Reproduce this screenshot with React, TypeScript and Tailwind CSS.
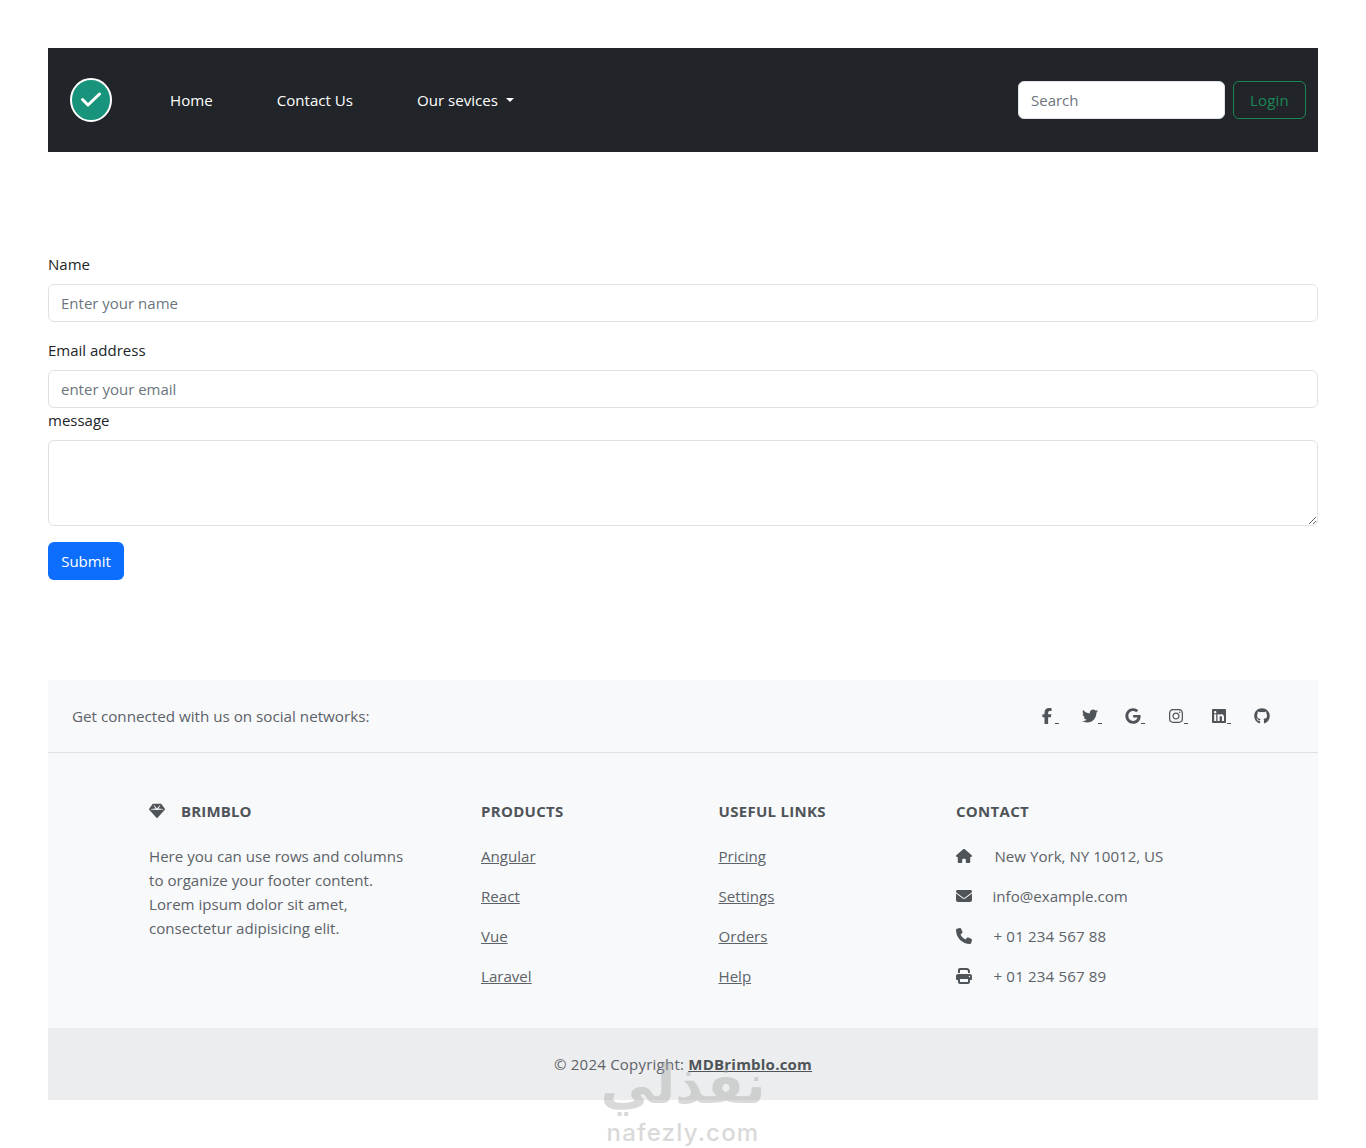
import { FaFacebookF, FaTwitter, FaGoogle, FaInstagram, FaLinkedin, FaGithub, FaGem, FaHouse, FaEnvelope, FaPhone, FaPrint } from "react-icons/fa6"

const socials = [FaFacebookF, FaTwitter, FaGoogle, FaInstagram, FaLinkedin, FaGithub]

const products = ["Angular", "React", "Vue", "Laravel"]
const usefulLinks = ["Pricing", "Settings", "Orders", "Help"]

const contacts = [
  { Icon: FaHouse, text: "New York, NY 10012, US", gap: "w-[38.5px]", track: "" },
  { Icon: FaEnvelope, text: "info@example.com", gap: "w-[36.5px]", track: "" },
  { Icon: FaPhone, text: "+ 01 234 567 88", gap: "w-[37.5px]", track: "tracking-[0.15px]" },
  { Icon: FaPrint, text: "+ 01 234 567 89", gap: "w-[37.5px]", track: "tracking-[0.15px]" },
]

const inputClass = "h-[38px] w-full rounded-md border border-[#dee2e6] bg-white px-3 text-[15px] text-[#212529] placeholder:text-[#6c757d] outline-none"

function Navbar() {
  return (
    <nav className="flex h-[104px] items-center bg-[#212529] pl-[22px] pr-3">
      <svg width="42" height="44" viewBox="0 0 42 44" className="shrink-0">
        <ellipse cx="21" cy="22" rx="20" ry="21" fill="#17947b" stroke="#fff" strokeWidth="2" />
        <path d="M12.5 21.5l5.5 5.5 11.5-11" fill="none" stroke="#fff" strokeWidth="3" strokeLinecap="round" strokeLinejoin="round" />
      </svg>
      <div className="ml-[58px] flex items-center gap-16 text-[15.1px] text-white">
        <a href="#">Home</a>
        <a href="#">Contact Us</a>
        <a href="#" className="flex items-center">
          Our sevices
          <span className="ml-2 h-0 w-0 border-x-[4.5px] border-t-[4.5px] border-x-transparent border-t-white"></span>
        </a>
      </div>
      <form className="ml-auto flex gap-2">
        <input placeholder="Search" className="h-[38px] w-[207px] rounded-md border border-[#dee2e6] bg-white px-3 text-[15px] placeholder:text-[#6c757d] outline-none" />
        <button type="button" className="h-[38px] w-[73px] rounded-md border border-[#198754] text-[15px] tracking-[0.2px] text-[#198754]">Login</button>
      </form>
    </nav>
  )
}

function ContactForm() {
  return (
    <form className="mt-[100px] text-[15px] text-[#212529]">
      <label className="mb-2 block leading-6">Name</label>
      <input placeholder="Enter your name" className={inputClass + " mb-4 block"} />
      <label className="mb-2 block leading-6">Email address</label>
      <input placeholder="enter your email" className={inputClass + " block"} />
      <label className="mb-2 block leading-6">message</label>
      <textarea className="mb-4 block h-[86px] w-full rounded-md border border-[#dee2e6] bg-white px-3 py-1.5 outline-none"></textarea>
      <button type="button" className="block h-[38px] w-[76px] rounded-md bg-[#0d6efd] text-white">Submit</button>
    </form>
  )
}

function LinkColumn({ title, links }: { title: string; links: string[] }) {
  return (
    <div>
      <h6 className="mb-[21px] text-[15px] font-bold uppercase leading-6 tracking-[0.3px] text-[#4f5459]">{title}</h6>
      {links.map((l) => (
        <p key={l} className="mb-4 leading-6"><a href="#" className="underline">{l}</a></p>
      ))}
    </div>
  )
}

function Footer() {
  return (
    <footer className="mt-[100px] bg-[#f8f9fa] text-[15.1px] text-[#5c6268]">
      <section className="flex h-[73px] items-center justify-between border-b border-[#dee2e6] pl-6 pr-12">
        <span className="text-[15.2px]">Get connected with us on social networks:</span>
        <div className="flex items-center gap-[27px] text-[#4f5459]">
          {socials.map((Icon, i) => (
            <a key={i} href="#" className="flex items-end">
              <Icon className="h-4 w-auto shrink-0" />
              {i < 5 && <span className="mr-[-4px] h-[1px] w-[4px] bg-[#4f5459]"></span>}
            </a>
          ))}
        </div>
      </section>
      <section className="grid grid-cols-[332px_237.5px_237.5px_1fr] pb-6 pl-[101px] pt-[46px]">
        <div className="w-[265px]">
          <h6 className="mb-[21px] flex items-center text-[15px] font-bold uppercase leading-6 tracking-[0.15px] text-[#4f5459]">
            <FaGem className="mr-4 h-4 w-4" />
            Brimblo
          </h6>
          <p className="leading-6">Here you can use rows and columns to organize your footer content. Lorem ipsum dolor sit amet, consectetur adipisicing elit.</p>
        </div>
        <LinkColumn title="Products" links={products} />
        <LinkColumn title="Useful links" links={usefulLinks} />
        <div>
          <h6 className="mb-[21px] text-[15px] font-bold uppercase leading-6 tracking-[0.3px] text-[#4f5459]">Contact</h6>
          {contacts.map(({ Icon, text, gap, track }) => (
            <p key={text} className={"mb-4 flex items-center leading-6 " + track}>
              <span className={gap + " shrink-0"}><Icon className="h-4 w-auto text-[#4f5459]" /></span>
              {text}
            </p>
          ))}
        </div>
      </section>
      <div className="flex h-[72px] items-center justify-center bg-[#ecedee] text-[15px] tracking-[0.23px]">
        <span>© 2024 Copyright: <a href="#" className="font-bold text-[#4f5459] underline">MDBrimblo.com</a></span>
      </div>
    </footer>
  )
}

export default function App() {
  return (
    <div className="relative min-h-[1148px] overflow-hidden bg-white p-12 font-['Open_Sans',sans-serif]">
      <Navbar />
      <ContactForm />
      <Footer />
      <div className="pointer-events-none absolute bottom-0 left-[593px] flex w-[180px] flex-col items-center text-[#a3a3a3] opacity-40">
        <span className="mb-1 font-['DejaVu_Sans',sans-serif] text-[54px] font-bold leading-[58px]">نفذلي</span>
        <span className="font-['Inter',sans-serif] text-[24px] font-medium leading-[30px] tracking-[1.2px]">nafezly.com</span>
      </div>
    </div>
  )
}
